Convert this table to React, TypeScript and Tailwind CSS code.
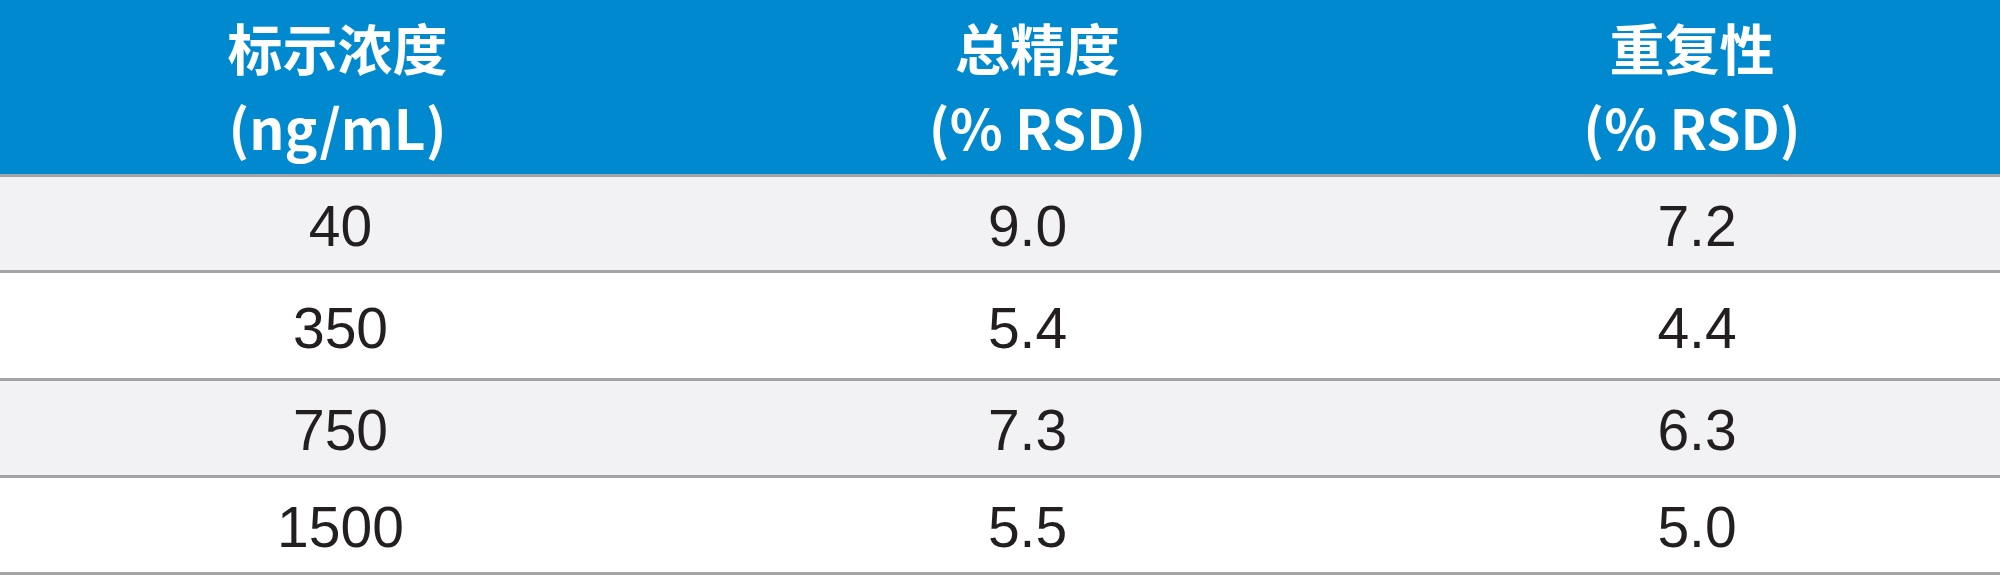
const headerFont = { fontFamily: '"Noto Sans CJK SC", "Noto Sans", sans-serif' }
const cellFont = { fontFamily: '"Liberation Sans", Arial, sans-serif' }

const columns = [
  { title: '标示浓度', unit: '(ng/mL)', pad: '' },
  { title: '总精度', unit: '(% RSD)', pad: '' },
  { title: '重复性', unit: '(% RSD)', pad: 'pr-[16px]' },
]

const cellPad = ['pl-[6px]', 'pr-[20px]', 'pr-[6px]']

const rows = [
  { values: ['40', '9.0', '7.2'], h: 'h-[96px]', bg: 'bg-[#f2f2f5]' },
  { values: ['350', '5.4', '4.4'], h: 'h-[108px]', bg: 'bg-white' },
  { values: ['750', '7.3', '6.3'], h: 'h-[97px]', bg: 'bg-[#f2f2f5]' },
  { values: ['1500', '5.5', '5.0'], h: 'h-[97px]', bg: 'bg-white' },
]

export default function App() {
  return (
    <div className="h-[582px] w-[2000px] overflow-hidden bg-white">
      <div
        className="grid h-[177px] grid-cols-[675px_725px_600px] border-b-[3px] border-[#a2a4a8] bg-[#0189d0]"
        style={headerFont}
      >
        {columns.map((c) => (
          <div
            key={c.unit + c.title}
            className={`flex flex-col items-center justify-center pb-[2px] text-[55px] font-bold leading-[80px] text-white ${c.pad}`}
          >
            <span>{c.title}</span>
            <span>{c.unit}</span>
          </div>
        ))}
      </div>
      {rows.map((r) => (
        <div key={r.values[0]} className={`grid grid-cols-[675px_725px_600px] border-b-[3px] border-[#a2a4a8] ${r.h} ${r.bg}`}>
          {r.values.map((v, i) => (
            <div
              key={i}
              className={`flex items-center justify-center pt-[6px] text-[57px] text-[#231f20] ${cellPad[i]}`}
              style={cellFont}
            >
              {v}
            </div>
          ))}
        </div>
      ))}
    </div>
  )
}
